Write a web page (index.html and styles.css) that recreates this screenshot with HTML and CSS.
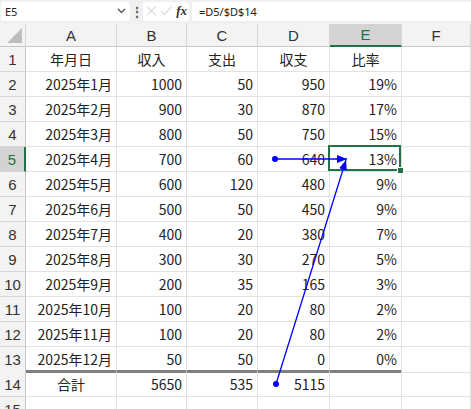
FILE: index.html
```html
<!DOCTYPE html>
<html lang="ja">
<head>
  <meta charset="UTF-8" />
  <title>Book1 - Excel</title>
  <link rel="stylesheet" href="styles.css">
</head>
<body>
  <div class="formula-bar">
    <div class="name-box">E5<span class="chevron"><svg width="9" height="6" viewBox="0 0 9 6"><path d="M1 1 L4.5 4.5 L8 1" fill="none" stroke="#444" stroke-width="1.2"/></svg></span></div>
    <div class="grip">⋮</div>
    <div class="fx-box">
      <svg width="14" height="14" viewBox="0 0 14 14"><path d="M2 2 L12 12 M12 2 L2 12" stroke="#c4c4c4" stroke-width="1.1"/></svg>
      <svg width="14" height="14" viewBox="0 0 14 14"><path d="M1.5 7.5 L5 11 L12.5 2.5" fill="none" stroke="#c4c4c4" stroke-width="1.1"/></svg>
      <span class="fx">fx</span>
    </div>
    <div class="formula">=D5/$D$14</div>
  </div>

  <div class="sheet">
    <div class="hd corner"></div>
    <div class="hd">A</div><div class="hd">B</div><div class="hd">C</div><div class="hd">D</div><div class="hd hd-sel">E</div><div class="hd">F</div>

    <div class="rh">1</div><div class="c ctr">年月日</div><div class="c ctr">収入</div><div class="c ctr">支出</div><div class="c ctr">収支</div><div class="c ctr">比率</div><div class="c"></div>
    <div class="rh">2</div><div class="c">2025年1月</div><div class="c">1000</div><div class="c">50</div><div class="c">950</div><div class="c">19%</div><div class="c"></div>
    <div class="rh">3</div><div class="c">2025年2月</div><div class="c">900</div><div class="c">30</div><div class="c">870</div><div class="c">17%</div><div class="c"></div>
    <div class="rh">4</div><div class="c">2025年3月</div><div class="c">800</div><div class="c">50</div><div class="c">750</div><div class="c">15%</div><div class="c"></div>
    <div class="rh rh-sel">5</div><div class="c">2025年4月</div><div class="c">700</div><div class="c">60</div><div class="c">640</div><div class="c sel">13%</div><div class="c"></div>
    <div class="rh">6</div><div class="c">2025年5月</div><div class="c">600</div><div class="c">120</div><div class="c">480</div><div class="c">9%</div><div class="c"></div>
    <div class="rh">7</div><div class="c">2025年6月</div><div class="c">500</div><div class="c">50</div><div class="c">450</div><div class="c">9%</div><div class="c"></div>
    <div class="rh">8</div><div class="c">2025年7月</div><div class="c">400</div><div class="c">20</div><div class="c">380</div><div class="c">7%</div><div class="c"></div>
    <div class="rh">9</div><div class="c">2025年8月</div><div class="c">300</div><div class="c">30</div><div class="c">270</div><div class="c">5%</div><div class="c"></div>
    <div class="rh">10</div><div class="c">2025年9月</div><div class="c">200</div><div class="c">35</div><div class="c">165</div><div class="c">3%</div><div class="c"></div>
    <div class="rh">11</div><div class="c">2025年10月</div><div class="c">100</div><div class="c">20</div><div class="c">80</div><div class="c">2%</div><div class="c"></div>
    <div class="rh">12</div><div class="c">2025年11月</div><div class="c">100</div><div class="c">20</div><div class="c">80</div><div class="c">2%</div><div class="c"></div>
    <div class="rh last">13</div><div class="c last">2025年12月</div><div class="c last">50</div><div class="c last">50</div><div class="c last">0</div><div class="c last">0%</div><div class="c last-f"></div>
    <div class="rh">14</div><div class="c ctr">合計</div><div class="c">5650</div><div class="c">535</div><div class="c">5115</div><div class="c"></div><div class="c"></div>
    <div class="rh">15</div><div class="c"></div><div class="c"></div><div class="c"></div><div class="c"></div><div class="c"></div><div class="c"></div>
  </div>

  <!-- trace precedents arrows -->
  <svg class="arrows" width="471" height="409" viewBox="0 0 471 409">
    <defs>
      <marker id="head" markerWidth="10" markerHeight="8" refX="10" refY="4" orient="auto" markerUnits="userSpaceOnUse">
        <path d="M0 0 L10 4 L0 8 Z" fill="#0000ff"/>
      </marker>
    </defs>
    <line x1="275" y1="159" x2="347" y2="159" stroke="#0000ff" stroke-width="1.3" marker-end="url(#head)"/>
    <line x1="276" y1="384" x2="346" y2="160" stroke="#0000ff" stroke-width="1.3" marker-end="url(#head)"/>
    <circle cx="275" cy="159" r="3" fill="#0000ff"/>
    <circle cx="276" cy="384" r="3" fill="#0000ff"/>
  </svg>
</body>
</html>
```

FILE: styles.css
```css
html, body { margin: 0; padding: 0; }
body { position: relative; width: 471px; height: 409px; overflow: hidden; background: #fff; font-family: "Noto Sans CJK JP", "Noto Sans", sans-serif; }

.formula-bar { display: flex; align-items: center; height: 24px; background: #f0f0f0; padding: 0 0 2px 1px; box-sizing: border-box; font-family: "Noto Sans", sans-serif; font-size: 11px; color: #222; }
.name-box { display: flex; align-items: center; justify-content: space-between; width: 129px; height: 19px; box-sizing: border-box; padding: 0 4px 0 4px; background: #fff; border-radius: 3px; }
.chevron { display: flex; }
.grip { width: 13px; text-align: center; color: #555; font-size: 12px; font-weight: bold; }
.fx-box { display: flex; align-items: center; gap: 2px; width: 46px; height: 19px; box-sizing: border-box; padding: 0 2px; background: #fff; border-radius: 3px; }
.fx { font-family: "Liberation Serif", serif; font-style: italic; font-weight: bold; font-size: 13px; color: #333; margin-left: 2px; }
.formula { flex: 1; height: 19px; line-height: 19px; margin-left: 3px; padding-left: 7px; background: #fff; border-radius: 3px 0 0 3px; }

.sheet { display: grid; grid-template-columns: 26px 91px 70px 71px 72px 72px 1fr; grid-auto-rows: 25px; grid-template-rows: 23px; }
.sheet > div { box-sizing: border-box; display: flex; align-items: center; white-space: nowrap; }

.hd { justify-content: center; background: #f3f3f3; border-right: 1px solid #d6d6d6; border-bottom: 1px solid #c8c8c8; font-family: "Liberation Sans", sans-serif; font-size: 15px; color: #333; }
.hd-sel { background: #d3d3d3; color: #217346; border-bottom: 2px solid #217346; }
.corner { position: relative; }
.corner::after { content: ""; position: absolute; right: 3px; bottom: 3px; border-style: solid; border-width: 0 0 15px 15px; border-color: transparent transparent #bdbdbd transparent; }

.rh { justify-content: center; background: #f3f3f3; border-right: 1px solid #c8c8c8; border-bottom: 1px solid #d6d6d6; font-family: "Liberation Sans", sans-serif; font-size: 15px; color: #333; }
.rh-sel { background: #d3d3d3; color: #217346; border-right: 2px solid #217346; }

.c { justify-content: flex-end; padding: 0 4px; border-right: 1px solid #e1e1e1; border-bottom: 1px solid #e1e1e1; font-size: 14px; color: #222; }
.c.ctr { justify-content: center; }
.sheet > .last { height: 26px; border-bottom: 3px solid #7f7f7f; }
.sheet > .rh.last { border-bottom: 1px solid #d6d6d6; }
.sheet > .last-f { height: 26px; }

.sel { position: relative; }
.sel::before { content: ""; position: absolute; top: -2px; left: -2px; right: 0; bottom: 0; border: 2px solid #217346; z-index: 2; }
.sel::after { content: ""; position: absolute; right: -3px; bottom: -3px; width: 5px; height: 5px; background: #217346; border: 1px solid #fff; z-index: 3; }

.arrows { position: absolute; top: 0; left: 0; pointer-events: none; z-index: 5; }
```
